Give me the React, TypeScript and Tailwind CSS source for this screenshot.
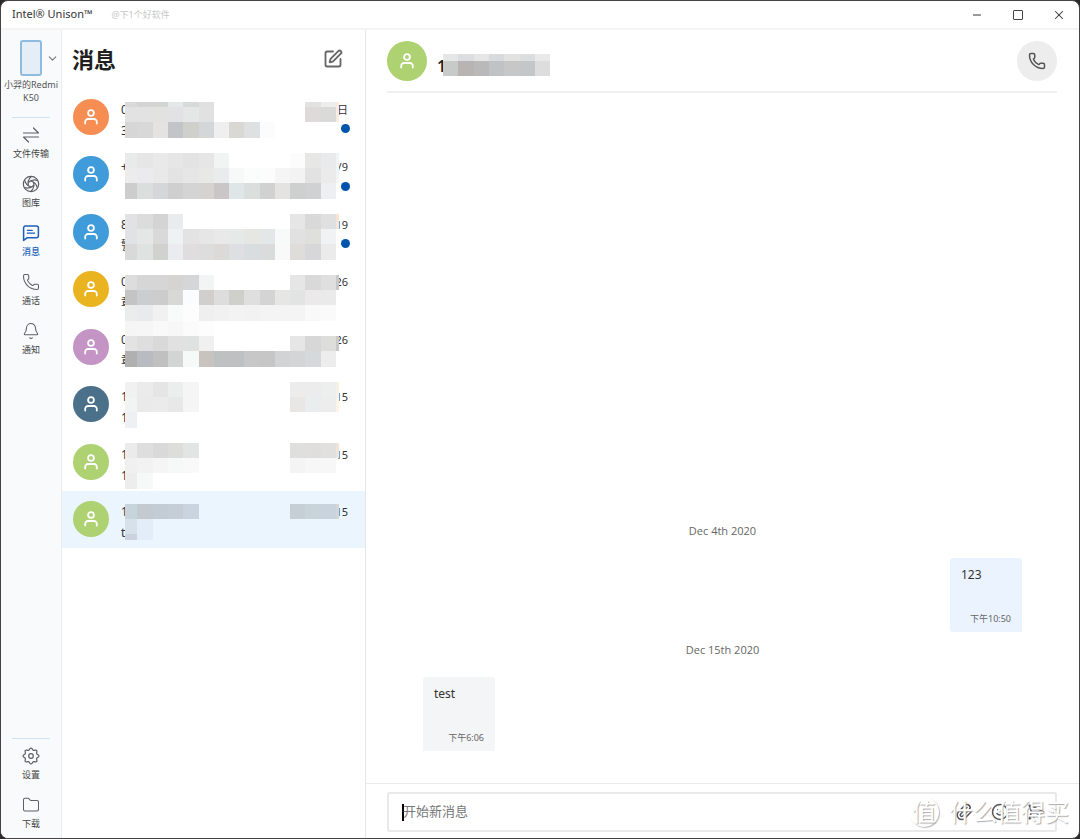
import type { ReactNode } from "react";
import { Bell, ChevronDown, Folder, Minus, Paperclip, Phone, SendHorizontal, Smile, SquarePen, X } from "lucide-react";

type Conversation = {
    name: string;
    preview: string;
    date: string;
    color: string;
    unread?: boolean;
    active?: boolean;
};

const conversations: Conversation[] = [
    { name: "0", preview: "3", date: "日", color: "bg-[#f68d52]", unread: true },
    { name: "+", preview: "", date: "/9", color: "bg-[#3f9bd9]", unread: true },
    { name: "8", preview: "警", date: "19", color: "bg-[#3f9bd9]", unread: true },
    { name: "0", preview: "章", date: "26", color: "bg-[#eab320]" },
    { name: "0", preview: "章", date: "26", color: "bg-[#c394c4]" },
    { name: "1", preview: "1", date: "15", color: "bg-[#4b7089]" },
    { name: "1", preview: "1", date: "15", color: "bg-[#aed172]" },
    { name: "1", preview: "t", date: "15", color: "bg-[#aed172]", active: true },
];

// Censored blocks: column edges, then one entry per strip [top, height, colours]
type Strip = [number, number, string];

const listEdges = [0, 12, 28, 43, 58, 74, 89, 104, 119, 135, 150, 165, 180, 196, 211, 214];

const listStrips: Strip[] = [
    [14, 5, "d9d9d9 d4d4d4 d4d4d4 e4e8e8 d9d9d9 e0e0e0 - - - - - - e2e2e2 ededed faebe0"],
    [19, 15, "e2e2e2 e2e2e2 e2e2e0 e2e2e4 e5e7e6 e1e1e1 - - - - - - dddad9 dadad9 faebe0"],
    [34, 16, "d6d6d6 d8d8d8 e5e3e1 c2c4c8 cfcfcc d5d6d8 efefef dad8d5 dee0e2 fcfcfc"],
    [65, 15, "e9ebea e6e6e6 e9e9e9 e6e6e6 e3e3e3 e6e6e6 f2f4f3 - - - - fcfcfc e7e7e5 e9eaeb f0f4f9"],
    [80, 15, "ececec ebebed e9e9e9 e3e3e3 e6e6e6 e8e8e6 e9ebec f7f8f8 fbfdfd fbfcfb f5f5f5 f3f3f3 e2e2e2 ebebeb f2f4f5"],
    [95, 16, "cdcdcd dadedd d5d6d7 cfcfcf d5d4d4 d5d3d2 cac6c8 dfe6e7 dadedd d1d1d1 e4e3e2 ccd0cf d0d1d2 eeeff2"],
    [126, 15, "e2e2e4 dcdcdc d4d4d4 eaebed - - - - - - - e6e6e6 d9d9d9 e0e0e1 fae4d4"],
    [141, 15, "e1e2e5 e5e6e6 d9d9d9 eff2f2 e3e3e3 e6e6e6 e9e9e9 e5e9e8 e6e6e3 e4e7e8 f8f9f9 e1e1e1 dfdfdc f1f2f4"],
    [156, 16, "d9d9d9 dee2e0 d1d1d0 ebecef dfdddd dddddd dcdad8 dddfe2 dadddf d9dcda f9f9f9 deddda d7d7d9 ebebeb"],
    [187, 15, "dddddd d6d6d6 d6d6d6 d6d4d3 d5d6d8 f3f5f5 - - - - - e6e6e6 d9d9d9 dfdfdf c8c8c8"],
    [202, 15, "c4c4c5 cccdcf cccccd d8d8d6 fbfcff d0cfce dddddd cfcfcc dfdfe0 d4d4d5 e6e6e5 e1e4e3 ebe9e9 eaeaea"],
    [217, 16, "ebecec e9eaec f1f1f1 f8fbf9 fdfdfd efefef f1f1f1 f3f3f3 f2f2f2 f4f4f4 f4f4f4 f4f4f4 f9f9f9 fafafa"],
    [233, 15, "f5f5f5 f6f6f6 f9f9f9 f7f7f7 fbfbfb fdfdfd"],
    [248, 15, "e3e3e3 dddedd d9d9d9 e1e1e1 dfe2e0 f0f0f0 - - - - - e6e6e6 d7d7d7 ddddda c8c8c8"],
    [263, 16, "b0b0b0 b8bcc0 c0c0c1 d3d4d4 f5f9f8 c9c3c0 bdc1c2 bfc0c1 c7c7c7 c6c6c6 d2d3d4 d3d5d7 d5d9db ededed"],
    [294, 15, "f1f1f1 ebebeb e5e5e5 eceeed f5f5f5 - - - - - - ebeceb ececec edefee f7f0e5"],
    [309, 15, "f1f4f3 eaeaea ebebeb e7e8e7 f5f5f5 - - - - - - e9e7e6 eaedee ededed fff4e6"],
    [324, 16, "eff0f3"],
    [355, 15, "eaebea dedede d9d9d9 dddddc e3e5e4 - - - - - - dfdfde dfdedd e1e0df f0e5d8"],
    [370, 15, "f0f0f0 f2f2f2 f4f5f4 f7f9f8 f9f9f9 - - - - - - f4f4f4 f7f7f7 f7f7f7"],
    [385, 16, "ededed f7f9f8"],
    [416, 15, "c8d4dc c3cad2 c3cbd4 c5ced7 c9d4de - - - - - - c7cfd6 c8d3da c9d3de d4d5d4"],
    [431, 15, "d7e1ea e3edf7"],
    [446, 6, "cbd4de e3edf7"],
];

const titleEdges = [0, 15, 31, 46, 61, 77, 92, 107];

const titleStrips: Strip[] = [
    [0, 7, "e6e6e6 dcdde0 e6e6e6 d9dadd e2e2e0 dcdddf e9e9e9"],
    [7, 15, "c8cac9 b7b4b3 b9b9b9 c1c2c5 c7c7c7 c5c6c8 dddddd"],
];

function Mosaic({ edges, strips, className }: { edges: number[]; strips: Strip[]; className: string }) {
    return (
        <svg className={className} shapeRendering="crispEdges" aria-hidden="true">
            {strips.map(([top, height, colors]) =>
                colors.split(" ").map((color, i) =>
                    color === "-" ? null : (
                        <rect key={`${top}-${i}`} x={edges[i]} y={top} width={edges[i + 1] - edges[i]} height={height} fill={`#${color}`} />
                    )
                )
            )}
        </svg>
    );
}

function PersonIcon() {
    return (
        <svg className="size-5" viewBox="0 0 20 20" fill="none" stroke="white" strokeWidth="1.8" strokeLinecap="round" aria-hidden="true">
            <circle cx="10" cy="6" r="2.9" />
            <path d="M4.200 16.600v-1.800a2.800 2.800 0 0 1 2.800-2.800h6a2.800 2.800 0 0 1 2.800 2.800v1.800" />
        </svg>
    );
}

function NavIcon({ children }: { children: ReactNode }) {
    return (
        <svg className="size-[18px]" viewBox="0 0 18 18" fill="none" stroke="currentColor" strokeWidth="1.2" strokeLinecap="round" strokeLinejoin="round" aria-hidden="true">
            {children}
        </svg>
    );
}

function TransferIcon() {
    return (
        <NavIcon>
            <path d="M1.5 7h15l-5-5M16.5 11h-15l5 5" />
        </NavIcon>
    );
}

function GalleryIcon() {
    return (
        <NavIcon>
            <circle cx="9" cy="9" r="7.7" />
            {[0, 60, 120, 180, 240, 300].map((angle) => (
                <path key={angle} d="M6.400 7.500Q10.200 3.900 15.300 5.400" transform={`rotate(${angle} 9 9)`} />
            ))}
        </NavIcon>
    );
}

function MessageIcon() {
    return (
        <NavIcon>
            <path d="M3.600 2h10.800a2 2 0 0 1 2 2v7.800a2 2 0 0 1-2 2H5l-3.400 2.600V4a2 2 0 0 1 2-2z" strokeWidth="1.5" />
            <path d="M5.400 6.400h4.800M5.400 9.200h7.200" strokeWidth="1.3" />
        </NavIcon>
    );
}

// Eight shallow lobes around the hub
const gearPoints = Array.from({ length: 96 }, (_, i) => {
    const a = (i / 96) * Math.PI * 2;
    const r = 7 + 0.9 * Math.cos(a * 8);
    return `${(9 + r * Math.cos(a)).toFixed(2)},${(9 + r * Math.sin(a)).toFixed(2)}`;
}).join(" ");

function GearIcon() {
    return (
        <NavIcon>
            <polygon points={gearPoints} />
            <circle cx="9" cy="9" r="2.3" />
        </NavIcon>
    );
}

function NavItem({ label, icon, active }: { label: string; icon: ReactNode; active?: boolean }) {
    return (
        <a href="#" className={`flex flex-col items-center gap-[3px] ${active ? "text-[#1b5fb8]" : "text-[#5c5f63]"}`}>
            {icon}
            <span className={`text-[9px] leading-[13px] ${active ? "font-medium" : "text-[#444]"}`}>{label}</span>
        </a>
    );
}

function Sidebar() {
    return (
        <nav className="flex w-[61px] shrink-0 flex-col border-r border-[#ececee] bg-[#f8fafc] pt-[10px] pb-2">
            <button type="button" className="flex flex-col items-center">
                <span className="relative h-9 w-[22px] rounded-[3px] border-2 border-[#8fbbe0] bg-[#e5edf6]">
                    <ChevronDown className="absolute top-2.5 left-6 size-[13px] text-[#777]" strokeWidth={2} />
                </span>
                <span className="mt-0.5 text-[9px] leading-[13px] text-[#555]">小羿的Redmi K50</span>
            </button>
            <div className="mx-[11px] mt-[13px] border-t border-[#cfe3f6]" />
            <div className="mt-2 flex flex-col gap-[15px]">
                <NavItem label="文件传输" icon={<TransferIcon />} />
                <NavItem label="图库" icon={<GalleryIcon />} />
                <NavItem label="消息" icon={<MessageIcon />} active />
                <NavItem label="通话" icon={<Phone className="size-[18px]" strokeWidth={1.4} />} />
                <NavItem label="通知" icon={<Bell className="size-[18px]" strokeWidth={1.4} />} />
            </div>
            <div className="mx-[11px] mt-auto border-t border-[#cfe3f6]" />
            <div className="mt-2 flex flex-col gap-[15px]">
                <NavItem label="设置" icon={<GearIcon />} />
                <NavItem label="下载" icon={<Folder className="size-[18px]" strokeWidth={1.4} />} />
            </div>
        </nav>
    );
}

function ConversationRow({ item }: { item: Conversation }) {
    return (
        <li className={item.active ? "bg-[#eaf5fe]" : ""}>
            <a href="#" className="flex h-full items-center gap-3 pr-[17px] pl-[11px]">
                <span className={`flex size-9 shrink-0 items-center justify-center rounded-full ${item.color}`}>
                    <PersonIcon />
                </span>
                <span className="mt-[7px] flex h-[41px] min-w-0 flex-1 flex-col justify-between text-xs leading-5 text-[#333]">
                    <span className="flex justify-between">
                        <span>{item.name}</span>
                        <span className="text-[11px]">{item.date}</span>
                    </span>
                    <span className="flex h-5 items-center justify-between">
                        <span>{item.preview}</span>
                        {item.unread && <span className="-mt-1 -mr-0.5 size-[9px] rounded-full bg-[#0054ae]" />}
                    </span>
                </span>
            </a>
        </li>
    );
}

function ConversationList() {
    return (
        <section className="w-[304px] shrink-0 border-r border-[#e6e6e6]">
            <div className="flex h-[58px] items-center justify-between pr-[22px] pl-[10px]">
                <h1 className="text-[22px] leading-8 font-bold text-[#1f1f1f]">消息</h1>
                <button type="button" aria-label="新消息">
                    <SquarePen className="size-5 text-[#666]" strokeWidth={2.2} />
                </button>
            </div>
            <div className="relative">
                <ul className="grid h-[460px] auto-rows-fr">
                    {conversations.map((item, i) => (
                        <ConversationRow key={i} item={item} />
                    ))}
                </ul>
                <Mosaic edges={listEdges} strips={listStrips} className="pointer-events-none absolute top-0 left-[63px] h-[460px] w-[214px]" />
            </div>
        </section>
    );
}

function Bubble({ text, time, mine }: { text: string; time: string; mine?: boolean }) {
    return (
        <div className={`mt-[17px] flex h-[74px] w-[72px] flex-col justify-between px-[11px] pt-2 pb-1 ${mine ? "self-end rounded-[3px] rounded-br-none bg-[#eaf3ff]" : "self-start rounded-[3px] rounded-bl-none bg-[#f3f5f7]"}`}>
            <p className="text-xs leading-[18px] text-[#333]">{text}</p>
            <time className="self-end text-[9px] leading-[18px] whitespace-nowrap text-[#666]">{time}</time>
        </div>
    );
}

function Chat() {
    return (
        <main className="flex min-w-0 flex-1 flex-col">
            <header className="mr-[22px] ml-[21px] flex items-center justify-between border-b-2 border-[#f0f0f0] pt-[11px] pb-[10px]">
                <div className="flex items-center gap-2.5">
                    <span className="flex size-10 items-center justify-center rounded-full bg-[#aed172]">
                        <PersonIcon />
                    </span>
                    <div className="relative pt-2.5">
                        <h2 className="text-base leading-6 font-semibold text-[#222]">1</h2>
                        <Mosaic edges={titleEdges} strips={titleStrips} className="absolute top-2.5 left-1.5 h-[22px] w-[107px]" />
                    </div>
                </div>
                <button type="button" aria-label="通话" className="flex size-10 items-center justify-center rounded-full bg-[#ededed] text-[#555]">
                    <Phone className="size-[18px]" strokeWidth={2} />
                </button>
            </header>

            <div className="flex flex-1 flex-col justify-end px-[57px] pb-8">
                <p className="text-center font-['Open_Sans'] text-[11px] leading-5 text-[#666]">Dec 4th 2020</p>
                <Bubble text="123" time="下午10:50" mine />
                <p className="mt-2 text-center font-['Open_Sans'] text-[11px] leading-5 text-[#666]">Dec 15th 2020</p>
                <Bubble text="test" time="下午6:06" />
            </div>

            <footer className="border-t border-[#ebebeb] pt-2 pr-[22px] pb-1.5 pl-[21px]">
                <form className="flex h-10 items-center gap-[18px] rounded-[3px] border-2 border-[#e9e9e9] pr-2.5 pl-[13px]">
                    <span className="h-[17px] w-0.5 bg-black" />
                    <input type="text" aria-label="开始新消息" placeholder="开始新消息" className="-ml-[19px] min-w-0 flex-1 text-[13px] outline-none placeholder:text-[#777]" />
                    <button type="button" aria-label="附件">
                        <Paperclip className="size-[18px] text-[#555]" strokeWidth={2} />
                    </button>
                    <button type="button" aria-label="表情">
                        <Smile className="size-[18px] text-[#555]" strokeWidth={2} />
                    </button>
                    <button type="button" aria-label="发送">
                        <SendHorizontal className="size-[18px] text-[#555]" strokeWidth={2} />
                    </button>
                </form>
            </footer>
        </main>
    );
}

export default function App() {
    return (
        <div className="flex min-h-screen flex-col bg-[#2a2829] font-['Noto_Sans','Noto_Sans_CJK_SC',sans-serif]">
            <div className="relative flex flex-1 flex-col overflow-hidden rounded-lg border border-[#444244] bg-white">
                <div className="flex h-[29px] shrink-0 items-center border-b-2 border-[#f4f4f4] pl-[11px]">
                    <span className="text-[11px] text-[#333]">Intel® Unison™</span>
                    <span className="ml-[19px] text-[9px] text-[#c8c8c8]">@下1个好软件</span>
                    <div className="ml-auto flex items-center text-[#333]">
                        <button type="button" aria-label="最小化" className="flex w-[41px] justify-center">
                            <Minus className="size-3" strokeWidth={2} />
                        </button>
                        <button type="button" aria-label="最大化" className="flex w-[41px] justify-center">
                            <span className="size-2.5 rounded-[1px] border border-[#444]" />
                        </button>
                        <button type="button" aria-label="关闭" className="flex w-[41px] justify-center">
                            <X className="size-3.5" strokeWidth={1.8} />
                        </button>
                    </div>
                </div>
                <div className="flex flex-1">
                    <Sidebar />
                    <ConversationList />
                    <Chat />
                </div>
                <div className="pointer-events-none absolute right-2.5 bottom-2.5 flex items-center gap-2.5 text-2xl leading-8 text-white [text-shadow:1px_1px_1px_#aaa]">
                    <span className="flex size-[30px] items-center justify-center rounded-full shadow-[1px_1px_1px_#bbb]">值</span>
                    <span>什么值得买</span>
                </div>
            </div>
        </div>
    );
}
